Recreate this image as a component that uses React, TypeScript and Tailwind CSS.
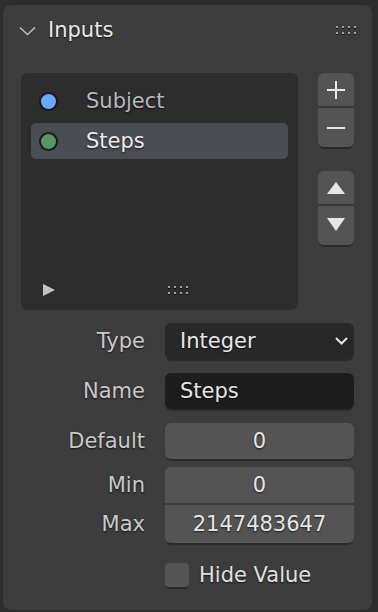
import React from 'react';

const font = "font-['DejaVu_Sans',sans-serif]";
const shadow = '[text-shadow:0_1px_2px_rgba(0,0,0,0.7)]';

const Grip = ({ className = '' }: { className?: string }) => (
  <div className={`grid grid-cols-4 gap-x-[4px] gap-y-[3px] ${className}`}>
    {Array.from({ length: 8 }).map((_, i) => (
      <div key={i} className="w-[2px] h-[3px] flex flex-col">
        <div className="h-[2px] bg-[#a0a0a0]" />
        <div className="h-[1px] bg-[#111]" />
      </div>
    ))}
  </div>
);

const ListRow = ({ color, label, active }: any) => (
  <div
    className={`h-[36px] flex items-center rounded-[5px] ${active ? 'bg-[#4a4d53]' : ''}`}
  >
    <div
      className="ml-[8px] w-[19px] h-[19px] rounded-full border-2 border-[#1a1a1a]"
      style={{ background: color }}
    />
    <span className={`ml-[28px] ${active ? 'text-[#ececec]' : 'text-[#b8b8b8]'} ${shadow}`}>{label}</span>
  </div>
);

const Label = ({ children }: any) => (
  <div className={`w-[142px] text-right text-[#c9c9c9] ${shadow}`}>{children}</div>
);

export default function App() {
  return (
    <div className={`w-[378px] h-[612px] bg-[#2e2e2e] pt-[5px] pl-[3px] pr-[6px] ${font} text-[21px] leading-none`}>
      <div className="h-[605px] bg-[#3d3d3d] rounded-[8px] relative">
        {/* header */}
        <div className="h-[50px] flex items-center pl-[16px] pr-[12px]">
          <svg width="17" height="10" viewBox="0 0 17 10" className="mt-[1px]">
            <path d="M1 1.5 L8.5 8.5 L16 1.5" stroke="#bdbdbd" strokeWidth="1.6" fill="none" />
          </svg>
          <span className={`ml-[12px] text-[#e8e8e8] ${shadow}`}>Inputs</span>
          <Grip className="ml-auto mr-[4px]" />
        </div>

        {/* list + side buttons */}
        <div className="flex pl-[18px] mt-[18px]">
          <div className="w-[277px] h-[235px] bg-[#2d2d2d] rounded-[6px] shadow-[0_3px_1px_-1px_rgba(0,0,0,0.25)] flex flex-col px-[10px] pt-[10px]">
            <div className="flex flex-col gap-[4px]">
              <ListRow color="#6ba8ff" label="Subject" />
              <ListRow color="#5a9463" label="Steps" active />
            </div>
            <div className="mt-auto mb-[12px] h-[12px] flex items-center relative">
              <svg width="12" height="12" viewBox="0 0 12 12" className="ml-[12px]">
                <path d="M0 0 L12 6 L0 12 Z" fill="#c4c4c4" />
              </svg>
              <Grip className="absolute left-[137px] top-[2px]" />
            </div>
          </div>

          <div className="ml-[20px] flex flex-col">
            <div className="w-[36px] rounded-[6px] overflow-hidden shadow-[0_3px_1px_-1px_rgba(0,0,0,0.3)] flex flex-col">
              <div className="h-[35px] bg-[#545454] border-b-2 border-[#3a3a3a] flex items-center justify-center">
                <svg width="18" height="18" viewBox="0 0 18 18">
                  <path d="M0 9 H18 M9 0 V18" stroke="#e6e6e6" strokeWidth="2" />
                </svg>
              </div>
              <div className="h-[39px] bg-[#545454] flex items-center justify-center">
                <svg width="18" height="18" viewBox="0 0 18 18">
                  <path d="M0 9 H18" stroke="#e6e6e6" strokeWidth="2" />
                </svg>
              </div>
            </div>
            <div className="mt-[24px] w-[36px] rounded-[6px] overflow-hidden shadow-[0_3px_1px_-1px_rgba(0,0,0,0.3)] flex flex-col">
              <div className="h-[35px] bg-[#545454] border-b-2 border-[#3a3a3a] flex items-center justify-center">
                <svg width="18" height="12" viewBox="0 0 18 12">
                  <path d="M9 0 L18 12 L0 12 Z" fill="#e6e6e6" />
                </svg>
              </div>
              <div className="h-[39px] bg-[#545454] flex items-center justify-center">
                <svg width="18" height="13" viewBox="0 0 18 13" className="mb-[2px]">
                  <path d="M0 0 L18 0 L9 13 Z" fill="#e6e6e6" />
                </svg>
              </div>
            </div>
          </div>
        </div>

        {/* properties */}
        <div className="mt-[15px] flex flex-col pr-[18px]">
          <div className="flex items-center h-[36px]">
            <Label>Type</Label>
            <div className="ml-[20px] flex-1 h-[36px] bg-[#282828] rounded-[6px] shadow-[0_3px_1px_-1px_rgba(0,0,0,0.3)] flex items-center pl-[15px] pr-[6px]">
              <span className={`text-[#e6e6e6] ${shadow}`}>Integer</span>
              <svg width="13" height="8" viewBox="0 0 13 8" className="ml-auto">
                <path d="M1 1 L6.5 6.5 L12 1" stroke="#e6e6e6" strokeWidth="2" fill="none" />
              </svg>
            </div>
          </div>
          <div className="flex items-center h-[36px] mt-[14px]">
            <Label>Name</Label>
            <div className="ml-[20px] flex-1 h-[36px] bg-[#1d1d1d] rounded-[6px] shadow-[0_3px_1px_-1px_rgba(0,0,0,0.3)] flex items-center pl-[15px]">
              <span className={`text-[#e6e6e6] ${shadow}`}>Steps</span>
            </div>
          </div>
          <div className="flex items-center h-[36px] mt-[14px]">
            <Label>Default</Label>
            <div className="ml-[20px] flex-1 h-[36px] bg-[#545454] rounded-[6px] shadow-[0_3px_1px_-1px_rgba(0,0,0,0.3)] flex items-center justify-center">
              <span className={`text-[#e6e6e6] ${shadow}`}>0</span>
            </div>
          </div>
          <div className="flex mt-[8px]">
            <div className="flex flex-col">
              <div className="h-[36px] flex items-center">
                <Label>Min</Label>
              </div>
              <div className="h-[38px] mt-[2px] flex items-center">
                <Label>Max</Label>
              </div>
            </div>
            <div className="ml-[20px] flex-1 flex flex-col rounded-[6px] overflow-hidden shadow-[0_3px_1px_-1px_rgba(0,0,0,0.3)]">
              <div className="h-[36px] bg-[#545454] flex items-center justify-center">
                <span className={`text-[#e6e6e6] ${shadow}`}>0</span>
              </div>
              <div className="h-[38px] mt-[2px] bg-[#545454] flex items-center justify-center">
                <span className={`text-[#e6e6e6] ${shadow}`}>2147483647</span>
              </div>
            </div>
          </div>
          <div className="flex items-center h-[36px] mt-[14px]">
            <div className="w-[142px]" />
            <div className="ml-[20px] w-[24px] h-[24px] bg-[#545454] rounded-[4px] shadow-[0_3px_1px_-1px_rgba(0,0,0,0.3)]" />
            <span className={`ml-[10px] text-[#e0e0e0] ${shadow}`}>Hide Value</span>
          </div>
        </div>
      </div>
    </div>
  );
}
